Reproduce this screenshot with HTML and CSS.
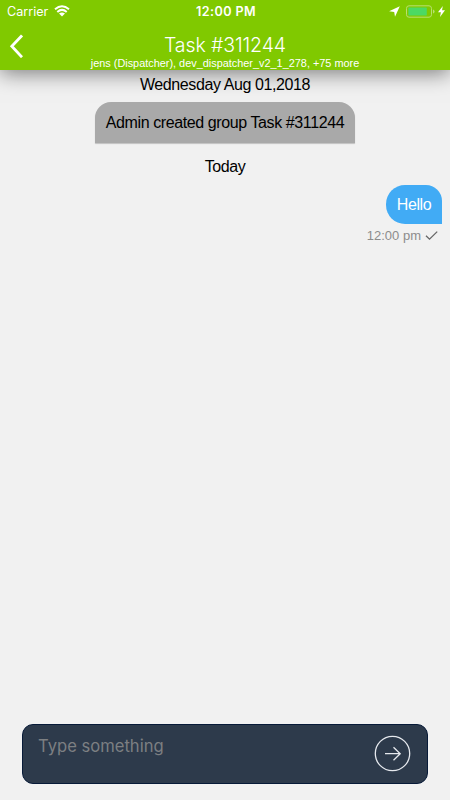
FILE: index.html
```html
<!DOCTYPE html>
<html lang="en">

<head>
    <meta charset="utf-8">
    <title>Task #311244</title>
    <link rel="stylesheet" href="styles.css">
</head>

<body>
    <header class="header">
        <div class="status-bar">
            <div class="status-left">
                <span class="carrier">Carrier</span>
                <svg class="wifi" width="16" height="12" viewBox="0 0 16 12">
                    <path d="M1 4.3 Q8 -1.7 15 4.3 M3.3 6.9 Q8 2.9 12.7 6.9" fill="none" stroke="#fff" stroke-width="2" />
                    <path d="M5 8.6 Q8 6.2 11 8.6 L8 11.6 Z" fill="#fff" />
                </svg>
            </div>
            <span class="clock">12:00 PM</span>
            <div class="status-right">
                <svg width="11" height="11" viewBox="0 0 11 11">
                    <path d="M10.8 0.2 L6 10.8 L5.2 5.9 L0.1 5.3 Z" fill="#fff" />
                </svg>
                <svg class="battery" width="29" height="13" viewBox="0 0 29 13">
                    <rect x="0.5" y="0.8" width="25" height="11.4" rx="2.5" fill="none" stroke="#b8df70" />
                    <rect x="2.4" y="2.6" width="18.4" height="7.8" rx="0.6" fill="#4cd964" />
                    <path d="M27 4.4 Q28.6 5 28.6 6.5 Q28.6 8 27 8.6 Z" fill="#b8df70" />
                </svg>
                <svg class="bolt" width="7" height="11" viewBox="0 0 7 11">
                    <path d="M4.8 0 L0 6.2 H2.9 L2 11 L7 4.3 H4 Z" fill="#fff" />
                </svg>
            </div>
        </div>
        <div class="nav-bar">
            <svg class="back" width="14" height="24" viewBox="0 0 14 24">
                <path d="M13 1.4 L2.8 12.3 L13 23.2" fill="none" stroke="#fff" stroke-width="2.8" />
            </svg>
            <div class="heading">
                <h1><span>Task #311244</span></h1>
                <p><span>jens (Dispatcher), dev_dispatcher_v2_1_278, +75 more</span></p>
            </div>
        </div>
    </header>

    <main class="messages">
        <div class="date"><span>Wednesday Aug 01,2018</span></div>
        <div class="notice"><span>Admin created group Task #311244</span></div>
        <div class="date today"><span>Today</span></div>
        <div class="bubble"><span>Hello</span></div>
        <div class="meta">
            <span>12:00 pm</span>
            <svg width="13" height="10" viewBox="0 0 13 10">
                <path d="M1 4.8 L4.5 8.2 L12.2 0.6" fill="none" stroke="#666" stroke-width="1.3" />
            </svg>
        </div>
    </main>

    <footer class="composer">
        <span class="placeholder">Type something</span>
        <svg class="send" width="37" height="37" viewBox="0 0 37 37">
            <circle cx="18.5" cy="18.5" r="17.2" />
            <path d="M11 18.7 H26 M19.5 12.2 L26.2 18.7 L19.5 25.2" />
        </svg>
    </footer>
</body>

</html>
```
FILE: styles.css
```css
* {
    box-sizing: border-box;
}

body {
    margin: 0;
    height: 800px;
    display: flex;
    flex-direction: column;
    overflow: hidden;
    background-color: #f1f1f1;
    font-family: "Liberation Sans", Arial, sans-serif;
    color: #000;
}

svg {
    display: block;
    flex: none;
}

span {
    white-space: nowrap;
}

.header {
    height: 70px;
    flex: none;
    background-color: #80c900;
    color: #fff;
    box-shadow: 0 3px 20px rgba(0, 0, 0, 0.5);
}

.status-bar {
    height: 22px;
    display: grid;
    grid-template-columns: 1fr auto 1fr;
    align-items: center;
    padding: 0 5px 0 7px;
    font-family: Inter, sans-serif;
    font-size: 12.6px;
}

.status-left,
.status-right {
    display: flex;
    align-items: center;
}

.status-right {
    justify-content: flex-end;
}

.wifi {
    margin-left: 6px;
}

.clock {
    font-weight: 600;
    letter-spacing: 0.4px;
}

.battery {
    margin-left: 6px;
}

.bolt {
    margin-left: 3px;
}

.nav-bar {
    height: 48px;
    display: flex;
    padding: 12px 24px 0 10px;
}

.back {
    margin-left: -1px;
    margin-right: 1px;
}

.heading {
    flex: 1;
    text-align: center;
}

.heading h1 {
    margin: 0;
    font-family: Inter, sans-serif;
    font-size: 19.5px;
    font-weight: 300;
    letter-spacing: -0.1px;
    line-height: 23px;
}

.heading p {
    margin: 0;
    font-size: 10.9px;
    line-height: 12px;
}

.messages {
    flex: 1;
    display: flex;
    flex-direction: column;
    align-items: center;
    padding: 5px 8px 0;
    font-size: 16px;
    letter-spacing: -0.4px;
}

.date {
    line-height: 20px;
}

.notice {
    width: 260px;
    height: 41px;
    margin-top: 7px;
    border-radius: 16px 16px 0 0;
    background-color: #a9a9a9;
    line-height: 41px;
    text-align: center;
    box-shadow: 0 1px 1px rgba(0, 0, 0, 0.2);
}

.today {
    margin-top: 14px;
}

.bubble {
    align-self: flex-end;
    width: 56px;
    height: 39px;
    margin-top: 8px;
    border-radius: 19px 16px 0 19px;
    background-color: #41abf5;
    color: #fff;
    line-height: 40px;
    text-align: center;
}

.meta {
    align-self: flex-end;
    display: flex;
    align-items: center;
    gap: 4px;
    margin: 2px 4px 0 0;
    color: #8c8c8c;
    font-size: 13px;
    letter-spacing: 0;
    line-height: 20px;
}

.composer {
    display: flex;
    justify-content: space-between;
    flex: none;
    height: 60px;
    margin: 0 22px 16px;
    padding: 10px 16px 0 15px;
    border: 1px solid #071a38;
    border-radius: 11px;
    background-color: #2d3a4b;
}

.placeholder {
    color: #7c7f82;
    font-family: Inter, sans-serif;
    font-size: 16.6px;
    line-height: 22px;
}

.send {
    fill: none;
    stroke: #e6e9ee;
    stroke-width: 1.3;
}
```
